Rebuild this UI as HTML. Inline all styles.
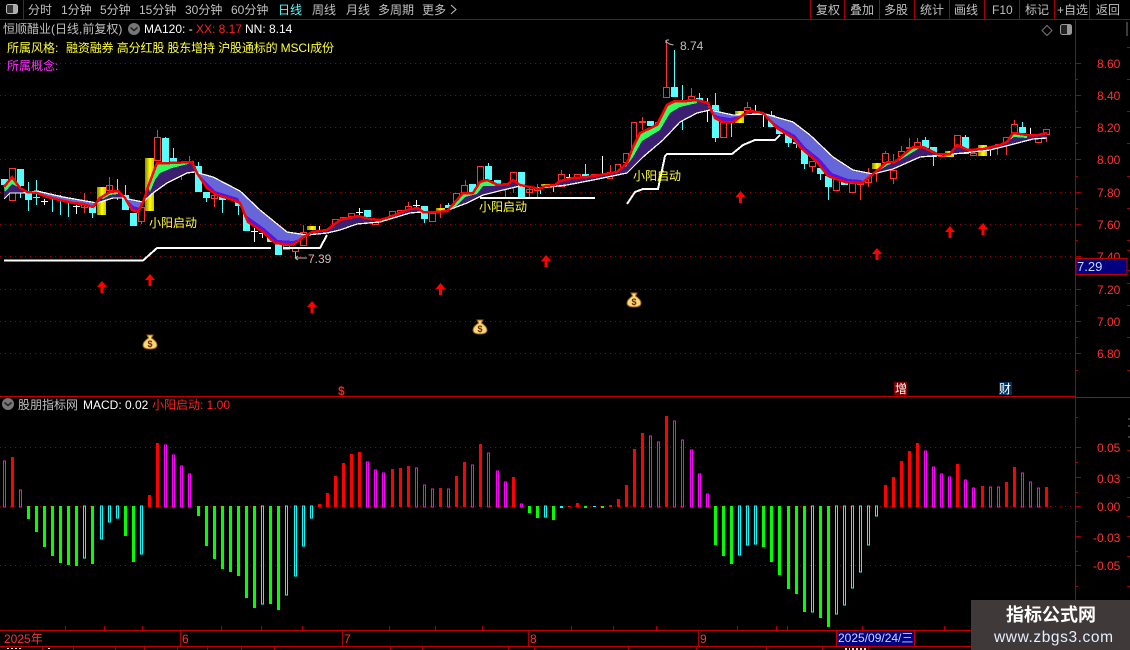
<!DOCTYPE html>
<html><head><meta charset="utf-8"><style>
html,body{margin:0;padding:0;background:#000;width:1130px;height:650px;overflow:hidden}
svg{display:block}
text{font-family:"Liberation Sans","WenQuanYi Zen Hei","Noto Sans CJK SC",sans-serif;font-size:12px}
</style></head><body>
<svg width="1130" height="650" viewBox="0 0 1130 650" xmlns="http://www.w3.org/2000/svg">
<defs><linearGradient id="g" x1="0" x2="1" y1="0" y2="0"><stop offset="0" stop-color="#8a8a00"/><stop offset=".55" stop-color="#ffff00"/><stop offset="1" stop-color="#c8c800"/></linearGradient></defs>
<rect width="1130" height="650" fill="#000"/>

<!-- grid -->
<g stroke="#990000" stroke-width="1" stroke-dasharray="1 4" shape-rendering="crispEdges">
<path d="M0 63.5H1075M0 95.5H1075M0 127.5H1075M0 159.5H1075M0 192.5H1075M0 224.5H1075M0 256.5H1075M0 289.5H1075M0 321.5H1075M0 353.5H1075"/>
<path d="M0 447.5H1075M0 506.5H1075M0 565.5H1075"/>
</g>

<!-- toolbar & frame -->
<g stroke="#a80000" fill="none" shape-rendering="crispEdges">
<path d="M0 19.5H1130M23.5 0V19M810.5 0V19M844.5 0V19M879.5 0V19M914.5 0V19M949.5 0V19M984.5 0V19M1019.5 0V19M1054.5 0V19M1089.5 0V19"/>
<path d="M1075.5 19V630" stroke-width="1"/>
<path d="M0 396.5H1075M1075 397.5H1130" stroke="#c00000"/>
<path d="M0 630.5H1130M0 646.5H1130" stroke="#c00000"/>
<path d="M180.500 631V646M342.500 631V646M528.500 631V646M698.500 631V646M65.500 626V630M104.500 626V630M142.500 626V630M221.500 626V630M261.500 626V630M302.500 626V630M389.500 626V630M435.500 626V630M482.500 626V630M571.500 626V630M613.500 626V630M656.500 626V630M737.500 626V630M776.500 626V630M787.500 626V630M862.500 626V630M944.500 626V630M42.500 646V650M73.500 646V650M115.500 646V650M144.500 646V650M177.500 646V650M207.500 646V650M241.500 646V650M274.500 646V650M390.500 646V650M422.500 646V650M508.500 646V650M534.500 646V650M628.500 646V650M696.500 646V650M766.500 646V650M822.500 646V650M868.500 646V650"/>
<path d="M1075 63.500H1081M1075 95.500H1081M1075 127.500H1081M1075 159.500H1081M1075 192.500H1081M1075 224.500H1081M1075 256.500H1081M1075 289.500H1081M1075 321.500H1081M1075 353.500H1081M1075 79.500H1078M1075 111.500H1078M1075 143.500H1078M1075 176.500H1078M1075 208.500H1078M1075 240.500H1078M1075 305.500H1078M1075 337.500H1078M1075 370.500H1078M1075 447.500H1081M1075 477.500H1081M1075 506.500H1081M1075 536.500H1081M1075 565.500H1081M1075 417.500H1078M1075 462.500H1078M1075 492.500H1078M1075 521.500H1078M1075 551.500H1078M1075 586.500H1078"/>
<path d="M1127 47.500H1130M1127 79.500H1130M1127 111.500H1130M1127 143.500H1130M1127 176.500H1130M1127 208.500H1130M1127 240.500H1130M1127 250.500H1130M1127 270.500H1130M1127 283.500H1130M1127 305.500H1130M1127 337.500H1130M1127 370.500H1130M1127 450.500H1130M1127 477.500H1130M1127 497.500H1130M1127 516.500H1130M1127 536.500H1130M1127 556.500H1130M1127 586.500H1130"/>
</g>
<path d="M1127 22V36M1128 419H1130M1128 426H1130M1128 437H1130" stroke="#777" stroke-width="1" shape-rendering="crispEdges"/>
<rect x="6.500" y="4.500" width="11" height="9" rx="2" fill="#333" stroke="#bbb"/><rect x="13" y="5" width="4" height="8" fill="#aaa"/>
<g fill="#c0c0c0">
<text x="28" y="14">分时</text><text x="61" y="14">1分钟</text><text x="100" y="14">5分钟</text><text x="139" y="14">15分钟</text><text x="185" y="14">30分钟</text><text x="231" y="14">60分钟</text>
<text x="278" y="14" fill="#54ffff">日线</text><text x="312" y="14">周线</text><text x="346" y="14">月线</text><text x="378" y="14">多周期</text><text x="422" y="14">更多</text>
<path d="M451 5l5 4.500-5 4.500" fill="none" stroke="#c0c0c0"/>
<text x="816" y="14">复权</text><text x="850" y="14">叠加</text><text x="884" y="14">多股</text><text x="920" y="14">统计</text><text x="954" y="14">画线</text><text x="992" y="14">F10</text><text x="1025" y="14">标记</text><text x="1057" y="14">+自选</text><text x="1096" y="14">返回</text>
<text x="3" y="33">恒顺醋业(日线,前复权)</text>
</g>
<circle cx="134" cy="29" r="6" fill="#777"/><path d="M130.500 27.500l3.500 3 3.500-3" stroke="#222" stroke-width="1.500" fill="none"/>
<text x="144" y="33" fill="#fff">MA120: -</text><text x="196" y="33" fill="#ff2020">XX: 8.17</text><text x="245" y="33" fill="#fff">NN: 8.14</text>
<text x="7" y="52" fill="#ffff30">所属风格:</text><text x="66" y="52" fill="#ffff30" textLength="268">融资融券 高分红股 股东增持 沪股通标的 MSCI成份</text>
<text x="7" y="70" fill="#ff30ff">所属概念:</text>
<path d="M1047 25.500l5 5-5 5-5-5z" fill="none" stroke="#777"/>
<rect x="1060.500" y="24.500" width="11" height="10" rx="2" fill="#222" stroke="#999"/><rect x="1067" y="25" width="4" height="9" fill="#999"/>

<!-- axis labels -->
<g fill="#ff3232">
<text x="1097" y="68">8.60</text><text x="1097" y="100">8.40</text><text x="1097" y="132">8.20</text><text x="1097" y="164">8.00</text><text x="1097" y="197">7.80</text><text x="1097" y="229">7.60</text><text x="1097" y="261">7.40</text><text x="1097" y="294">7.20</text><text x="1097" y="326">7.00</text><text x="1097" y="358">6.80</text>
<text x="1097" y="452">0.05</text><text x="1097" y="483">0.03</text><text x="1097" y="511">0.00</text><text x="1093" y="542">-0.03</text><text x="1093" y="570">-0.05</text>
</g>
<rect x="1076" y="258.500" width="51" height="16" fill="#000080" stroke="#c00000"/>
<text x="1077" y="271" fill="#c8d8ff" style="font-size:13px">7.29</text>

<!-- candles: wicks -->
<g fill="none" stroke="#ff3232" shape-rendering="crispEdges">
<path d="M84.500 193V213M109.500 177V197M141.500 222V224M157.500 130V137M181.500 163V180M189.500 156V161M214.500 190V207M295.500 252V258M303.500 225V232M408.500 202V206M440.500 204V218M465.500 180V185M505.500 185V197M513.500 183V193M529.500 186V197M537.500 184V197M561.500 170V174M610.500 165V172M642.500 117V130M666.500 40V87M691.500 88V96M747.500 102V107M812.500 167V172M860.500 185V200M868.500 168V187M876.500 170V182M885.500 151V153M893.500 154V163M893.500 179V184M901.500 146V151M909.500 138V147M917.500 138V142M997.500 147V155M1006.500 143V155M1014.500 120V124M1046.500 135V142"/>
<path d="M9.500 168.500h6v32h-6zM81.500 203.500h6v4h-6zM106.500 185.500h6v5h-6zM138.500 207.500h6v14h-6zM154.500 137.500h6v23h-6zM188.500 161.500h5v5h-5zM211.500 195.500h6v3h-6zM283.500 245.500h6v4h-6zM292.500 247.500h6v4h-6zM300.500 232.500h6v13h-6zM332.500 219.500h6v7h-6zM340.500 217.500h6v4h-6zM348.500 213.500h6v3h-6zM372.500 220.500h6v4h-6zM389.500 211.500h6v4h-6zM397.500 210.500h6v2h-6zM405.500 206.500h6v3h-6zM429.500 213.500h6v8h-6zM453.500 193.500h6v10h-6zM461.500 185.500h6v7h-6zM477.500 166.500h6v17h-6zM510.500 172.500h6v10h-6zM526.500 189.500h6v3h-6zM534.500 187.500h6v3h-6zM558.500 174.500h6v12h-6zM574.500 174.500h6v3h-6zM591.500 174.500h6v2h-6zM607.500 172.500h5v6h-5zM615.500 164.500h5v7h-5zM623.500 153.500h5v9h-5zM631.500 122.500h5v27h-5zM639.500 121.500h6v1h-6zM655.500 122.500h3v4h-3zM663.500 87.500h6v10h-6zM688.500 96.500h6v3h-6zM720.500 122.500h6v15h-6zM744.500 107.500h6v3h-6zM809.500 161.500h6v5h-6zM833.500 179.500h6v11h-6zM849.500 183.500h6v9h-6zM857.500 183.500h6v1h-6zM865.500 173.500h6v9h-6zM882.500 153.500h6v9h-6zM890.500 170.500h6v8h-6zM898.500 151.500h6v5h-6zM906.500 147.500h6v1h-6zM914.500 142.500h6v4h-6zM938.500 154.500h6v2h-6zM954.500 135.500h6v11h-6zM970.500 153.500h6v2h-6zM995.500 144.500h5v2h-5zM1003.500 137.500h6v5h-6zM1011.500 124.500h6v8h-6zM1035.500 135.500h6v7h-6zM1043.500 129.500h6v5h-6z"/>
</g>
<g fill="none" stroke="#54ffff" shape-rendering="crispEdges">
<path d="M20.500 186V198M28.500 182V211M36.500 180V205M52.500 194V212M60.500 195V215M68.500 200V217M92.500 204V218M117.500 179V200M125.500 185V195M165.500 137V138M173.500 148V158M198.500 162V166M206.500 198V202M222.500 200V213M238.500 200V215M424.500 219V223M448.500 203V205M488.500 163V166M585.500 164V174M553.500 185V192M540.500 190V194M674.500 50V87M682.500 85V130M699.500 93V98M715.500 93V142M731.500 117V137M771.500 111V115M788.500 143V147M796.500 140V148M804.500 164V169M820.500 174V180M828.500 187V200M925.500 137V140M933.500 157V166M965.500 135V137M1022.500 122V127"/>
</g>
<g fill="#54ffff" shape-rendering="crispEdges">
<rect x="1" y="179" width="7" height="6"/><rect x="17" y="169" width="7" height="17"/><rect x="25" y="193" width="7" height="7"/><rect x="33" y="197" width="7" height="1"/><rect x="89" y="206" width="7" height="7"/><rect x="122" y="195" width="7" height="15"/><rect x="130" y="213" width="7" height="13"/><rect x="162" y="138" width="7" height="25"/><rect x="170" y="158" width="7" height="5"/><rect x="195" y="166" width="7" height="26"/><rect x="203" y="192" width="7" height="6"/><rect x="219" y="197" width="7" height="3"/><rect x="235" y="202" width="5" height="4"/><rect x="243" y="213" width="7" height="18"/><rect x="267" y="235" width="7" height="7"/><rect x="275" y="243" width="7" height="12"/><rect x="364" y="210" width="7" height="7"/><rect x="421" y="206" width="7" height="13"/><rect x="445" y="205" width="7" height="3"/><rect x="469" y="184" width="7" height="9"/><rect x="485" y="166" width="7" height="14"/><rect x="494" y="180" width="7" height="5"/><rect x="518" y="172" width="7" height="25"/><rect x="582" y="174" width="7" height="3"/><rect x="647" y="121" width="7" height="5"/><rect x="671" y="87" width="7" height="10"/><rect x="679" y="100" width="7" height="1"/><rect x="696" y="98" width="7" height="4"/><rect x="712" y="105" width="7" height="33"/><rect x="768" y="115" width="7" height="12"/><rect x="776" y="127" width="7" height="7"/><rect x="785" y="133" width="7" height="10"/><rect x="793" y="142" width="6" height="2"/><rect x="801" y="150" width="7" height="14"/><rect x="817" y="168" width="7" height="6"/><rect x="825" y="176" width="7" height="11"/><rect x="841" y="182" width="7" height="3"/><rect x="922" y="140" width="7" height="8"/><rect x="930" y="147" width="7" height="10"/><rect x="962" y="137" width="7" height="17"/><rect x="1019" y="127" width="7" height="6"/>
</g>
<path d="M44.500 199V205M41 201.500H48M76.500 205V214M73 206.500H80M254.500 228V242M251 231.500H258M262.500 231V238M259 233.500H266M319.500 226V232M359.500 208V216M356 212.500H363M416.500 200V208M413 205.500H420M569.500 174V180M566 177.500H573M602.500 156V174M707.500 98V122M755.500 105V115M763.500 115V127M990.500 150V156M1030.500 128V134" stroke="#fff" fill="none" shape-rendering="crispEdges"/>

<!-- gold -->
<g fill="url(#g)">
<rect x="145" y="158" width="9" height="53"/><rect x="97" y="187" width="9" height="28"/><rect x="307" y="226" width="9" height="4"/><rect x="436" y="208" width="9" height="3"/><rect x="541" y="184" width="9" height="2"/><rect x="735" y="111" width="9" height="12"/><rect x="872" y="163" width="9" height="6"/><rect x="945" y="151" width="9" height="6"/><rect x="978" y="145" width="9" height="11"/>
</g>

<!-- ribbon -->
<g shape-rendering="crispEdges">
<polygon fill="#3c1f70" points="4,187 12,177 20,188 27,192 37,193 47,197 60,200 73,203 83,204 93,207 100,198 110,192 118,191 125,198 132,210 138,212 144,200 148,187 157,163 170,163 192,162 197,173 207,188 217,195 233,200 240,203 248,222 263,232 275,243 293,245 302,238 312,232 327,230 340,220 358,216 370,219 380,220 390,217 410,209 418,208 423,212 435,212 447,211 457,200 463,193 473,193 480,182 487,180 498,185 508,184 513,180 520,185 540,189 545,186 555,185 560,181 573,178 587,177 600,175 617,172 627,163 633,147 640,133 657,125 667,105 675,101 687,101 697,100 708,103 715,118 723,122 733,122 743,115 750,111 763,113 777,128 793,138 800,147 817,162 828,176 845,182 862,183 873,174 887,162 895,162 913,147 923,147 937,154 950,154 957,145 968,150 983,149 1000,145 1007,142 1013,133 1027,135 1038,135 1047,133 1047,138 1033,139 1010,145 990,150 963,153 943,155 920,157 893,169 873,174 853,170 833,157 810,135 793,122 765,114 733,115 710,110 697,113 680,122 663,140 643,157 627,173 593,180 567,185 540,188 520,186 503,190 483,195 467,203 443,212 422,212 410,213 380,222 357,224 340,230 327,233 307,235 287,232 260,210 240,191 213,177 195,172 187,173 167,183 153,193 143,202 123,198 113,198 97,203 80,200 63,197 37,191 23,193 10,193 4,199"/>
<g fill="#6666d8">
<polygon points="27,193 37,191 63,197 80,200 97,203 100,198 93,207 83,204 73,203 60,200 47,197 37,193"/>
<polygon points="120,196 143,202 144,200 138,212 132,210 125,198"/>
<polygon points="195,172 213,177 240,191 260,210 287,232 307,235 302,238 293,245 275,243 263,232 248,222 240,203 233,200 217,195 207,188 197,173"/>
<polygon points="520,186 540,188 540,189 520,185"/>
<polygon points="708,108 733,115 745,115 733,122 723,122 715,118 708,103"/>
<polygon points="765,114 793,122 810,135 833,157 853,170 873,174 862,183 845,182 828,176 817,162 800,147 793,138 777,128 763,113"/>
</g>
<g fill="#5a14e0">
<polygon points="197,173 215,191 238,198 247,216 264,228 278,240 293,241 302,238 293,245 275,243 263,232 248,222 240,203 233,200 217,195 207,188"/>
<polygon points="765,116 780,127 795,135 805,147 820,159 832,173 848,179 862,180 862,183 845,182 828,176 817,162 800,147 793,138 777,128"/>
<polygon points="710,112 718,116 730,118 745,115 733,122 723,122 715,118"/>
<polygon points="125,198 133,206 140,208 138,212 132,210"/>
</g>
<g fill="#30ff60">
<polygon points="4,187 12,177 20,188 12,184 5,192"/>
<polygon points="148,187 157,163 170,163 192,162 188,164 172,168 160,173 155,180 150,192"/>
<polygon points="100,198 110,192 118,191 118,194 110,195 103,199"/>
<polygon points="447,211 457,200 463,193 473,193 480,182 487,180 498,185 494,186 483,186 477,194 465,197 456,206"/>
<polygon points="627,163 633,147 640,133 657,125 667,105 675,101 687,101 697,100 697,103 680,107 670,113 660,130 642,141 633,157 625,168"/>
<polygon points="873,174 887,162 895,162 913,147 923,147 918,149 900,160 888,165"/>
<polygon points="1007,142 1013,133 1027,135 1027,138 1014,137"/>
</g>
<polyline fill="none" stroke="#fff" stroke-width="1.300" points="4,199 10,193 23,193 37,191 63,197 80,200 97,203 113,198 123,198 143,202 153,193 167,183 187,173 195,172 213,177 240,191 260,210 287,232 307,235 327,233 340,230 357,224 380,222 410,213 422,212 443,212 467,203 483,195 503,190 520,186 540,188 567,185 593,180 627,173 643,157 663,140 680,122 697,113 710,110 733,115 765,114 793,122 810,135 833,157 853,170 873,174 893,169 920,157 943,155 963,153 990,150 1010,145 1033,139 1047,138"/>
<polyline fill="none" stroke="#ff0000" stroke-width="2.500" points="4,187 12,177 20,188 27,192 37,193 47,197 60,200 73,203 83,204 93,207 100,198 110,192 118,191 125,198 132,210 138,212 144,200 148,187 157,163 170,163 192,162 197,173 207,188 217,195 233,200 240,203 248,222 263,232 275,243 293,245 302,238 312,232 327,230 340,220 358,216 370,219 380,220 390,217 410,209 418,208 423,212 435,212 447,211 457,200 463,193 473,193 480,182 487,180 498,185 508,184 513,180 520,185 540,189 545,186 555,185 560,181 573,178 587,177 600,175 617,172 627,163 633,147 640,133 657,125 667,105 675,101 687,101 697,100 708,103 715,118 723,122 733,122 743,115 750,111 763,113 777,128 793,138 800,147 817,162 828,176 845,182 862,183 873,174 887,162 895,162 913,147 923,147 937,154 950,154 957,145 968,150 983,149 1000,145 1007,142 1013,133 1027,135 1038,135 1047,133"/>
</g>

<!-- stair line -->
<g fill="none" stroke="#fff" stroke-width="2" shape-rendering="crispEdges">
<polyline points="4,260.500 143,260.500 157,248 271,248"/>
<polyline points="283,248 320,248 327,235"/>
<polyline points="480,198 595,198"/>
<polyline points="627,204 635,192 643,189 658,189 665,156 667,154 732,154 743,145 755,140 775,140 780,135"/>
</g>
<!-- hi/lo marks -->
<path d="M666.500 40H669M666.500 42l3 2 4 1M666 40v3" stroke="#bbb" fill="none"/><text x="680" y="50" fill="#c0c0c0">8.74</text>
<path d="M295 258H307M295 258l3-2M295 258l3 2M295.500 252V258" stroke="#bbb" fill="none"/><text x="308" y="263" fill="#c0c0c0">7.39</text>
<!-- labels -->
<g fill="#ffff30">
<text x="149" y="227">小阳启动</text><text x="479" y="211">小阳启动</text><text x="633" y="180">小阳启动</text>
</g>
<!-- arrows -->
<g fill="#ff0000">
<path d="M102 281l5 6h-3.500v6h-3v-6h-3.500z"/><path d="M150 274l5 6h-3.500v6h-3v-6h-3.500z"/><path d="M312 301l5 6h-3.500v6h-3v-6h-3.500z"/><path d="M440.500 283l5 6h-3.500v6h-3v-6h-3.500z"/><path d="M546 255l5 6h-3.500v6h-3v-6h-3.500z"/><path d="M740.500 191l5 6h-3.500v6h-3v-6h-3.500z"/><path d="M877 248l5 6h-3.500v6h-3v-6h-3.500z"/><path d="M950 226l5 6h-3.500v6h-3v-6h-3.500z"/><path d="M983 223l5 6h-3.500v6h-3v-6h-3.500z"/>
</g>
<!-- money bags -->
<g>
<g transform="translate(150,342)"><path d="M-3-7h6l-1.500 3C3-3 7 0 7 3c0 3-3 4-7 4s-7-1-7-4c0-3 4-6 5.500-7z" fill="#f8d878" stroke="#a06010"/><text x="-2.500" y="5" fill="#6a2a00" style="font-size:9px;font-weight:bold">$</text></g>
<g transform="translate(480,327)"><path d="M-3-7h6l-1.500 3C3-3 7 0 7 3c0 3-3 4-7 4s-7-1-7-4c0-3 4-6 5.500-7z" fill="#f8d878" stroke="#a06010"/><text x="-2.500" y="5" fill="#6a2a00" style="font-size:9px;font-weight:bold">$</text></g>
<g transform="translate(634,300)"><path d="M-3-7h6l-1.500 3C3-3 7 0 7 3c0 3-3 4-7 4s-7-1-7-4c0-3 4-6 5.500-7z" fill="#f8d878" stroke="#a06010"/><text x="-2.500" y="5" fill="#6a2a00" style="font-size:9px;font-weight:bold">$</text></g>
</g>
<!-- event markers -->
<text x="338" y="395" fill="#ff2020" style="font-weight:bold">$</text>
<rect x="894" y="382" width="13" height="13" fill="#800000"/><text x="895" y="393" fill="#fff">增</text>
<rect x="999" y="382" width="13" height="13" fill="#003060"/><text x="999" y="393" fill="#fff">财</text>

<!-- sub pane header -->
<circle cx="8" cy="404" r="6" fill="#777"/><path d="M4.500 402.500l3.500 3 3.500-3" stroke="#222" stroke-width="1.500" fill="none"/>
<text x="18" y="409" fill="#c0c0c0">股朋指标网</text><text x="83" y="409" fill="#fff">MACD: 0.02</text><text x="152" y="409" fill="#ff2020">小阳启动: 1.00</text>

<!-- MACD bars -->
<g fill="none" shape-rendering="crispEdges">
<path stroke="#ff0000" stroke-width="3" d="M12.500 457V507M149.500 495V507M157.500 443V507M319.500 504V507M327.500 493V507M335.500 476V507M343.500 463V507M351.500 454V507M359.500 452V507M392.500 469V507M400.500 468V507M408.500 466V507M440.500 488V507M456.500 476V507M464.500 462V507M480.500 444V507M513.500 477V507M569.500 506V507M577.500 503V507M610.500 505V507M618.500 499V507M626.500 485V507M634.500 449V507M642.500 433V507M666.500 416V507M885.500 485V507M893.500 477V507M901.500 461V507M909.500 451V507M917.500 443V507M957.500 464V507M982.500 486V507M1006.500 482V507M1014.500 467V507M1046.500 487V507"/>
<path stroke="#00ff00" stroke-width="3" d="M28.500 506V519M36.500 506V532M44.500 506V547M52.500 506V556M60.500 506V563M68.500 506V565M76.500 506V566M92.500 506V564M125.500 506V536M133.500 506V562M198.500 506V516M206.500 506V546M214.500 506V559M222.500 506V569M230.500 506V572M238.500 506V576M246.500 506V598M254.500 506V608M270.500 506V604M278.500 506V610M529.500 506V513M537.500 506V518M553.500 506V520M585.500 506V508M602.500 506V508M715.500 506V545M723.500 506V556M731.500 506V564M763.500 506V547M771.500 506V562M779.500 506V575M788.500 506V589M796.500 506V594M804.500 506V612M820.500 506V618M828.500 506V627"/>
<path stroke="#00ffff" stroke-width="3" d="M561.500 506V508M594.500 506V507"/>
<path stroke="#ff00ff" d="M3.500 461V507H5.500V461ZM19.500 490V507H21.500V490ZM164.500 445V507H166.500V445ZM172.500 455V507H174.500V455ZM180.500 466V507H182.500V466ZM188.500 474V507H190.500V474ZM366.500 462V507H368.500V462ZM374.500 470V507H376.500V470ZM382.500 473V507H384.500V473ZM415.500 468V507H417.500V468ZM423.500 485V507H425.500V485ZM431.500 489V507H433.500V489ZM447.500 489V507H449.500V489ZM471.500 465V507H473.500V465ZM487.500 453V507H489.500V453ZM496.500 471V507H498.500V471ZM504.500 482V507H506.500V482ZM520.500 504V507H522.500V504ZM649.500 436V507H651.500V436ZM657.500 442V507H659.500V442ZM673.500 421V507H675.500V421ZM681.500 440V507H683.500V440ZM690.500 450V507H692.500V450ZM698.500 474V507H700.500V474ZM706.500 494V507H708.500V494ZM924.500 451V507H926.500V451ZM932.500 467V507H934.500V467ZM940.500 474V507H942.500V474ZM948.500 477V507H950.500V477ZM964.500 480V507H966.500V480ZM972.500 488V507H974.500V488ZM989.500 487V507H991.500V487ZM997.500 487V507H999.500V487ZM1021.500 473V507H1023.500V473ZM1029.500 482V507H1031.500V482ZM1037.500 488V507H1039.500V488Z"/>
<path stroke="#00ffff" d="M83.500 506V558H85.500V506ZM100.500 506V539H102.500V506ZM108.500 506V522H110.500V506ZM116.500 506V518H118.500V506ZM140.500 506V554H142.500V506ZM261.500 506V604H263.500V506ZM285.500 506V595H287.500V506ZM294.500 506V576H296.500V506ZM302.500 506V546H304.500V506ZM310.500 506V518H312.500V506ZM544.500 506V517H546.500V506ZM738.500 506V555H740.500V506ZM746.500 506V545H748.500V506ZM754.500 506V544H756.500V506ZM811.500 506V612H813.500V506ZM835.500 506V614H837.500V506ZM843.500 506V605H845.500V506ZM851.500 506V588H853.500V506ZM859.500 506V572H861.500V506ZM867.500 506V545H869.500V506ZM875.500 506V516H877.500V506Z"/>
</g>

<!-- date axis -->
<g fill="#ff3232">
<text x="4" y="643">2025年</text><text x="182" y="643">6</text><text x="344" y="643">7</text><text x="530" y="643">8</text><text x="700" y="643">9</text>
</g>
<rect x="836.500" y="630.500" width="78" height="16" fill="#000080" stroke="#c00000"/>
<text x="838" y="642" fill="#c8d8ff">2025/09/24/三</text>
<path d="M7 648.500h14M48 648.500h4M845 648.500h5M852 648.500h14M845 649.500h5M852 649.500h14" stroke="#ddd" stroke-dasharray="2 2" shape-rendering="crispEdges"/>

<!-- watermark -->
<rect x="971" y="600" width="159" height="50" fill="#3f3a39"/>
<text x="1006" y="621" fill="#fff" style="font-size:18px;font-weight:bold" textLength="90">指标公式网</text>
<text x="994" y="642" fill="#e4f0ff" style="font-size:15.500px" textLength="119">www.zbgs3.com</text>
</svg>
</body></html>
